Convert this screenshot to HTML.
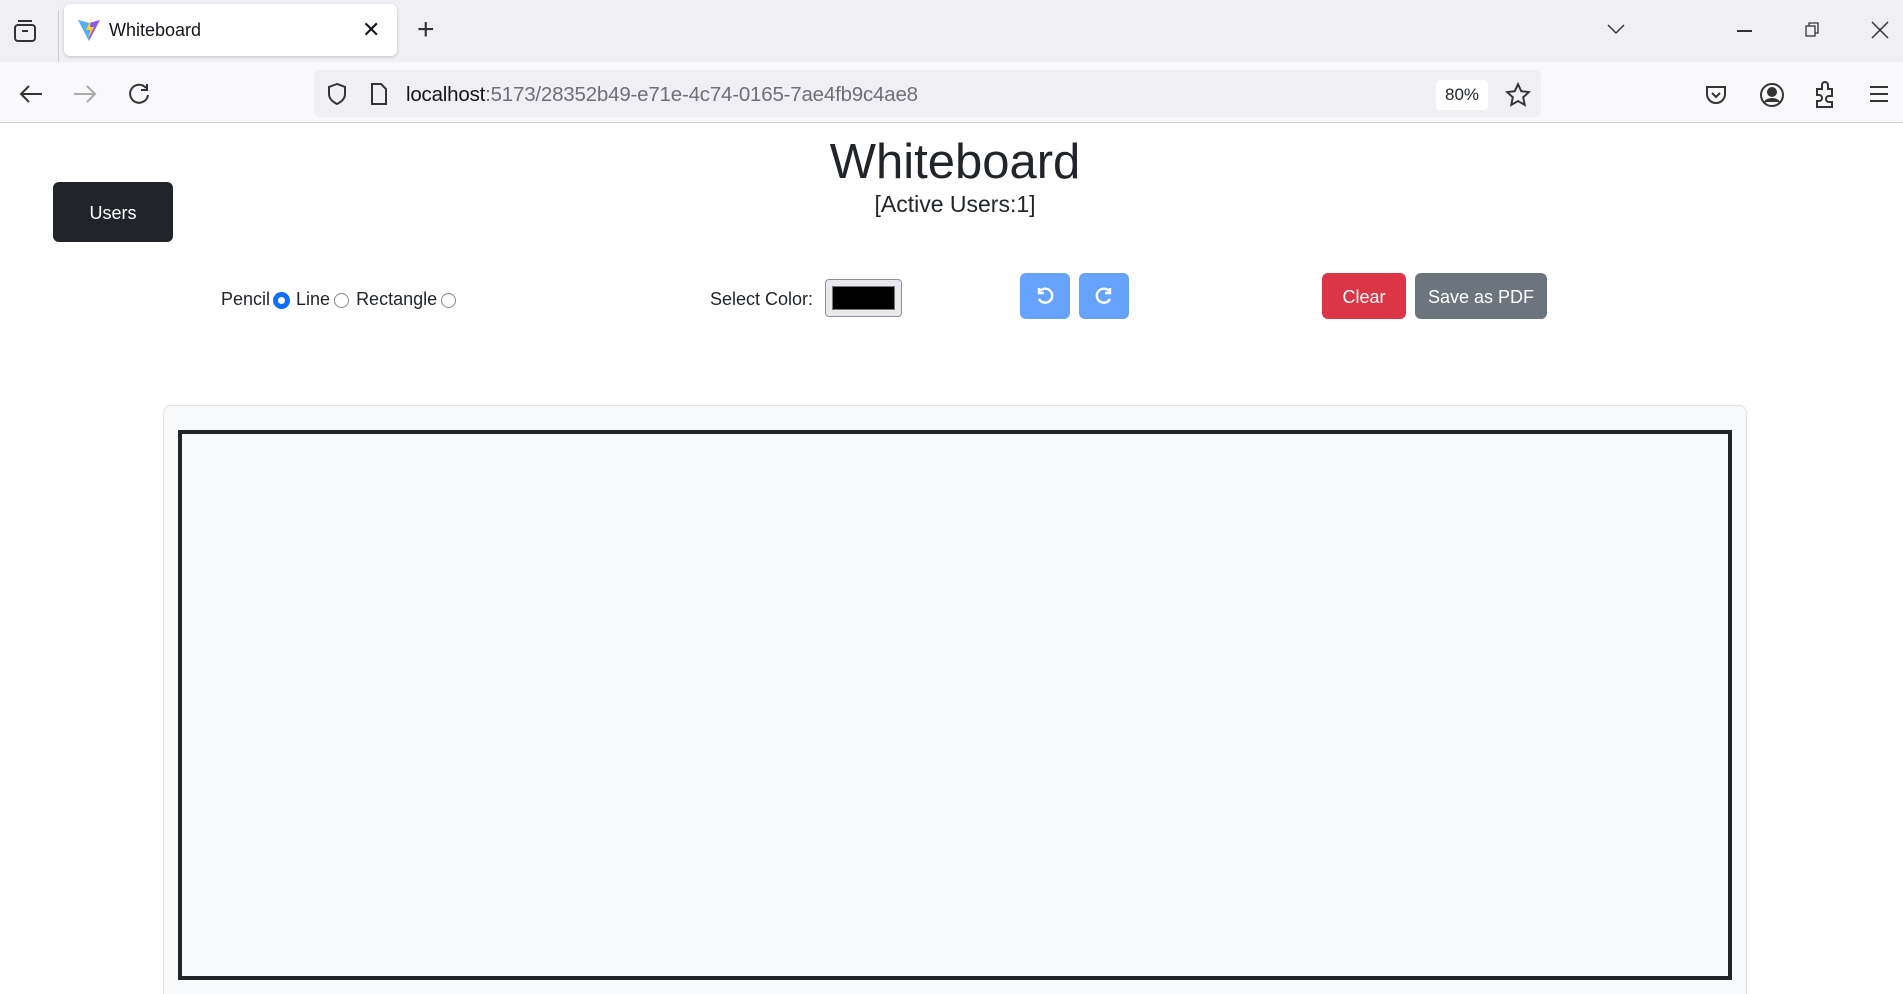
<!DOCTYPE html>
<html><head><meta charset="utf-8"><style>
*{box-sizing:border-box;margin:0;padding:0}
html,body{width:1903px;height:994px;overflow:hidden}
body{background:#fff;font-family:"Liberation Sans",sans-serif;position:relative;color:#212529}
.abs{position:absolute}
.tabbar{left:0;top:0;width:1903px;height:62px;background:#f0f0f4}
.nav{left:0;top:62px;width:1903px;height:61px;background:#f9f9fb;border-bottom:1px solid #cfcfd8}
.tab{left:64px;top:4px;width:333px;height:52px;background:#fff;border-radius:6px;box-shadow:0 1px 3px rgba(0,0,0,.2)}
.url{left:314px;top:70px;width:1227px;height:47px;background:#f0f0f4;border-radius:6px}
.btn{display:flex;align-items:center;justify-content:center;color:#fff;border-radius:6px;font-size:18px;padding-top:3px}
svg{position:absolute}
</style></head><body>
<div class="abs tabbar"></div>
<svg style="left:12px;top:18px" width="26" height="26" viewBox="0 0 26 26" fill="none" stroke="#333" stroke-width="2"><rect x="3" y="7" width="20" height="16" rx="3"/><path d="M6 3h14M10 13h6"/></svg>
<div class="abs" style="left:58px;top:10px;width:1px;height:52px;background:#ccc"></div>
<div class="abs tab"></div>
<svg style="left:77px;top:18px" width="24" height="24" viewBox="0 0 24 24"><path d="M1 2L12 23 23 2 12 5z" fill="#8d5cf6"/><path d="M1 2L12 23 12 5z" fill="#41c6ff" opacity=".8"/><path d="M14 1l-5 11h4l-2 9 6-12h-4z" fill="#ffd028"/></svg>
<div class="abs" style="left:109px;top:20px;font-size:18px;color:#15141a">Whiteboard</div>
<div class="abs" style="left:362px;top:17px;font-size:22px;color:#15141a">✕</div>
<div class="abs" style="left:417px;top:13px;font-size:30px;color:#333;font-weight:300">+</div>
<svg style="left:1606px;top:21px" width="20" height="16" viewBox="0 0 20 16" fill="none" stroke="#333" stroke-width="1.5"><path d="M2 4l8 8 8-8"/></svg>
<div class="abs" style="left:1737px;top:30px;width:15px;height:1.5px;background:#333"></div>
<svg style="left:1804px;top:21px" width="16" height="16" viewBox="0 0 16 16" fill="none" stroke="#333" stroke-width="1.3"><rect x="2" y="5" width="9" height="10"/><path d="M5 5V2h9v10h-3"/></svg>
<svg style="left:1871px;top:21px" width="18" height="18" viewBox="0 0 18 18" stroke="#333" stroke-width="1.5"><path d="M1 1l16 16M17 1L1 17"/></svg>
<div class="abs nav"></div>
<svg style="left:18px;top:83px" width="26" height="22" viewBox="0 0 26 22" fill="none" stroke="#333" stroke-width="2"><path d="M24 11H3M11 3l-8 8 8 8"/></svg>
<svg style="left:72px;top:83px" width="26" height="22" viewBox="0 0 26 22" fill="none" stroke="#aaa" stroke-width="2"><path d="M2 11h21M15 3l8 8-8 8"/></svg>
<svg style="left:127px;top:82px" width="24" height="24" viewBox="0 0 24 24" fill="none" stroke="#333" stroke-width="2"><path d="M19 6A9 9 0 1 0 21 13"/><path d="M20 2v6h-6"/></svg>
<div class="abs url"></div>
<svg style="left:326px;top:82px" width="22" height="24" viewBox="0 0 22 24" fill="none" stroke="#333" stroke-width="2"><path d="M11 2L3 5v7c0 5 4 8 8 10 4-2 8-5 8-10V5z"/></svg>
<svg style="left:370px;top:82px" width="18" height="24" viewBox="0 0 18 24" fill="none" stroke="#333" stroke-width="2"><path d="M2 2h9l5 5v15H2z"/></svg>
<div class="abs" style="left:406px;top:83px;font-size:20.5px;color:#15141a;letter-spacing:-0.2px">localhost<span style="color:#6e6e78">:5173/28352b49-e71e-4c74-0165-7ae4fb9c4ae8</span></div>
<div class="abs" style="left:1436px;top:80px;width:52px;height:30px;background:#fff;border-radius:4px;font-size:17px;display:flex;align-items:center;justify-content:center">80%</div>
<svg style="left:1505px;top:82px" width="26" height="26" viewBox="0 0 24 24" fill="none" stroke="#333" stroke-width="1.8"><path d="M12 2l3 6.5 7 .8-5.2 4.8 1.4 7L12 17.6 5.8 21.1l1.4-7L2 9.3l7-.8z"/></svg>
<svg style="left:1704px;top:83px" width="24" height="24" viewBox="0 0 24 24" fill="none" stroke="#333" stroke-width="2"><path d="M3 4h18v7a9 9 0 0 1-18 0z"/><path d="M8 10l4 4 4-4"/></svg>
<svg style="left:1759px;top:82px" width="26" height="26" viewBox="0 0 26 26" fill="none" stroke="#333" stroke-width="2"><circle cx="13" cy="13" r="11"/><circle cx="13" cy="10" r="4" fill="#333"/><path d="M6 20c3-4 11-4 14 0" fill="#333"/></svg>
<svg style="left:1813px;top:81px" width="24" height="28" viewBox="0 0 24 28" fill="none" stroke="#333" stroke-width="2"><path d="M4 8h5V4a3 3 0 0 1 6 0v4h4v7h-3a3 3 0 0 0 0 6h3v5H4v-6h2a3 3 0 0 0 0-6H4z"/></svg>
<svg style="left:1869px;top:85px" width="20" height="18" viewBox="0 0 20 18" stroke="#333" stroke-width="2"><path d="M1 2h18M1 9h18M1 16h18"/></svg>

<div class="abs" style="left:0;top:132px;width:1910px;text-align:center;font-size:49px;line-height:60px">Whiteboard</div>
<div class="abs" style="left:0;top:189px;width:1910px;text-align:center;font-size:23px;line-height:30px">[Active Users:1]</div>
<div class="abs btn" style="left:53px;top:182px;width:120px;height:60px;background:#212529">Users</div>

<div class="abs" style="left:221px;top:287px;font-size:18px;line-height:24px;display:flex;align-items:center;gap:2px">Pencil
<span style="width:15px;height:15px;border-radius:50%;border:4px solid #0d6efd;background:#fff;display:inline-block;margin:2px 5px 0 2px;box-shadow:0 0 0 1px #0d6efd"></span>Line
<span style="width:15px;height:15px;border-radius:50%;border:1.5px solid #888;display:inline-block;margin:2px 5px 0 2px"></span>Rectangle
<span style="width:15px;height:15px;border-radius:50%;border:1.5px solid #888;display:inline-block;margin:2px 0 0 2px"></span></div>
<div class="abs" style="left:710px;top:287px;font-size:18px;line-height:24px">Select Color:</div>
<div class="abs" style="left:825px;top:279px;width:77px;height:38px;background:#e9e9ed;border:1px solid #8f8f9d;border-radius:4px;padding:6px 6px"><div style="width:100%;height:100%;background:#000;border:1px solid #777"></div></div>
<div class="abs btn" style="left:1020px;top:273px;width:50px;height:46px;background:#66a3fd;padding:0"><svg style="position:static" width="20" height="20" viewBox="0 0 20 20" fill="none" stroke="#fff" stroke-width="2.4"><path d="M5 5a7 7 0 1 1-1 8"/><path d="M4 2v5h5"/></svg></div>
<div class="abs btn" style="left:1079px;top:273px;width:50px;height:46px;background:#66a3fd;padding:0"><svg style="position:static" width="20" height="20" viewBox="0 0 20 20" fill="none" stroke="#fff" stroke-width="2.4"><path d="M15 5a7 7 0 1 0 1 8"/><path d="M16 2v5h-5"/></svg></div>
<div class="abs btn" style="left:1322px;top:273px;width:84px;height:46px;background:#dc3545">Clear</div>
<div class="abs btn" style="left:1415px;top:273px;width:132px;height:46px;background:#6c757d">Save as PDF</div>

<div class="abs" style="left:163px;top:405px;width:1584px;height:600px;background:#f8f9fa;border:1.5px solid #dee2e6;border-radius:8px"></div>
<div class="abs" style="left:178px;top:430px;width:1554px;height:550px;border:4px solid #212529"></div>
</body></html>
